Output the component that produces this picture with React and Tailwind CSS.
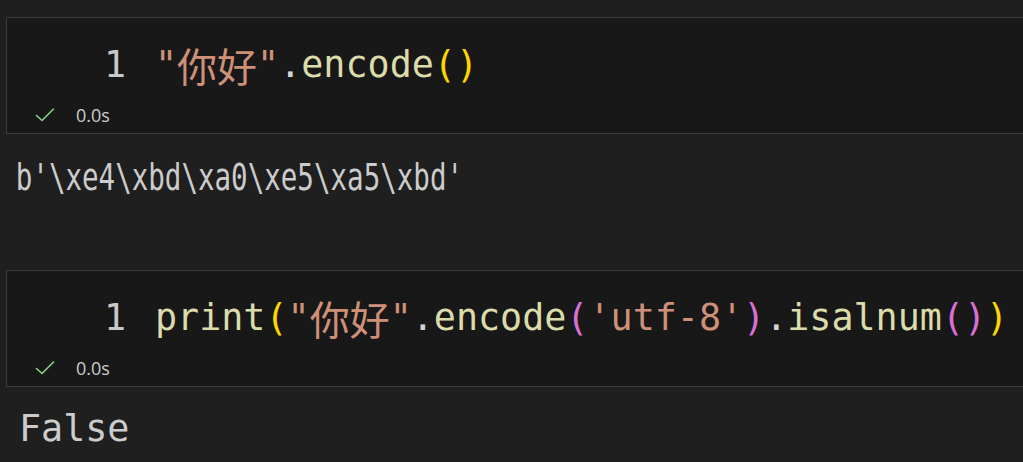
import React from 'react';

const MONO = { fontFamily: '"DejaVu Sans Mono", "Liberation Mono", "Noto Sans CJK SC", monospace' };

function Check() {
  return (
    <svg className="w-[20px] h-[16px]" viewBox="0 0 20 16" fill="none" stroke="#89d185" strokeWidth={1.6}>
      <path d="M1.5 8.5 L7 13.5 L18.5 2" strokeLinecap="round" strokeLinejoin="round" />
    </svg>
  );
}

function Cjk({ children }) {
  return (
    <span className="text-[40px] text-[#ce9178]" style={{ fontFamily: '"Noto Sans CJK SC", sans-serif' }}>
      {children}
    </span>
  );
}

function Cell({ children }) {
  return (
    <div className="w-[1100px] ml-[6px] bg-[#181818] border border-[#3c3c3c] pt-[23px] pb-[8px]">
      <div className="flex items-center h-[48px] leading-[48px] text-[36.7px] whitespace-nowrap" style={MONO}>
        <span className="ml-[97px] w-[22px] text-[#c8c8c8]">1</span>
        <span className="ml-[29px] flex items-center">{children}</span>
      </div>
      {/* run status */}
      <div className="mt-[16px] h-[20px] flex items-center">
        <span className="ml-[28px] flex items-center"><Check /></span>
        <span className="ml-[21px] text-[18px] text-[#cccccc]" style={{ fontFamily: '"Open Sans", "Noto Sans", sans-serif' }}>0.0s</span>
      </div>
    </div>
  );
}

export default function App() {
  return (
    <div className="w-[1023px] h-[462px] overflow-hidden bg-[#1f1f1f]">
      <div className="h-[17px]" />
      <Cell>
        <span className="text-[#ce9178]">"</span>
        <Cjk>你好</Cjk>
        <span className="text-[#ce9178]">"</span>
        <span className="text-[#d4d4d4]">.</span>
        <span className="text-[#dcdcaa]">encode</span>
        <span className="text-[#ffd700]">()</span>
      </Cell>

      <div className="h-[44px] mt-[22px] leading-[44px] text-[36.7px] text-[#cccccc] pl-[21px] whitespace-nowrap origin-left scale-x-[0.75]" style={MONO}>
        b'\xe4\xbd\xa0\xe5\xa5\xbd'
      </div>

      <div className="h-[70px]" />
      <Cell>
        <span className="text-[#dcdcaa]">print</span>
        <span className="text-[#ffd700]">(</span>
        <span className="text-[#ce9178]">"</span>
        <Cjk>你好</Cjk>
        <span className="text-[#ce9178]">"</span>
        <span className="text-[#d4d4d4]">.</span>
        <span className="text-[#dcdcaa]">encode</span>
        <span className="text-[#da70d6]">(</span>
        <span className="text-[#ce9178]">'utf-8'</span>
        <span className="text-[#da70d6]">)</span>
        <span className="text-[#d4d4d4]">.</span>
        <span className="text-[#dcdcaa]">isalnum</span>
        <span className="text-[#da70d6]">()</span>
        <span className="text-[#ffd700]">)</span>
      </Cell>

      <div className="h-[44px] mt-[20px] leading-[44px] text-[36.7px] text-[#cccccc] pl-[19px] whitespace-nowrap" style={MONO}>
        False
      </div>
    </div>
  );
}
